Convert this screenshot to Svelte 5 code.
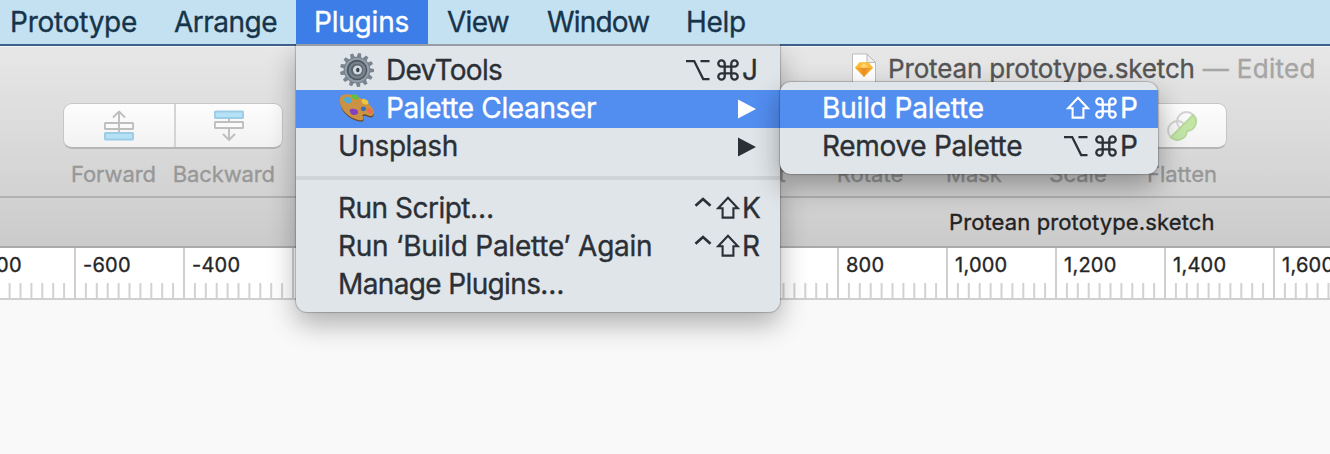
<script>
  const bar = [
    { label: 'Prototype', ls: -0.25 },
    { label: 'Arrange', ls: -0.5 },
    { label: 'Plugins', ls: -0.2, active: true },
    { label: 'View', ls: -0.7 },
    { label: 'Window', ls: -0.8 },
    { label: 'Help', ls: -0.3 }
  ];
  const menu = [
    { label: 'DevTools', ls: -0.72, icon: 'gear', keys: ['option', 'command'], key: 'J' },
    { label: 'Palette Cleanser', ls: -0.37, icon: 'palette', sub: true, active: true },
    { label: 'Unsplash', ls: -0.42, sub: true },
    { separator: true },
    { label: 'Run Script…', ls: -0.5, keys: ['control', 'shift'], key: 'K' },
    { label: 'Run ‘Build Palette’ Again', ls: -0.23, keys: ['control', 'shift'], key: 'R' },
    { label: 'Manage Plugins…', ls: -0.63 }
  ];
  const submenu = [
    { label: 'Build Palette', ls: -0.15, keys: ['shift', 'command'], key: 'P', active: true },
    { label: 'Remove Palette', ls: -0.31, keys: ['option', 'command'], key: 'P' }
  ];
  const tools = ['Edit', 'Rotate', 'Mask', 'Scale', 'Flatten'];
  const ruler = ['-800', '-600', '-400', '', '', '', '', '', '800', '1,000', '1,200', '1,400', '1,600'];
  const ticks = [1, 2, 3, 4, 5, 6, 7, 8, 9];
  const teeth = Array.from({ length: 13 }, (_, i) => (i * 360) / 13 + 8);
</script>

{#snippet symbol(name)}
  <svg class="symbol {name}" viewBox={name === 'control' ? '0 0 18 24' : '0 0 24 24'} fill="none" stroke="currentColor" stroke-width="2.3">
    {#if name === 'option'}
      <path d="M0 3.100h8.200l9 18h6.300M14.500 3.100h9" />
    {:else if name === 'command'}
      <path d="M8.700 8.700h6.600v6.600h-6.600zM8.700 8.700h-3.200a3.200 3.200 0 1 1 3.200-3.200zM15.300 8.700v-3.200a3.200 3.200 0 1 1 3.200 3.200zM15.300 15.300h3.200a3.200 3.200 0 1 1-3.200 3.200zM8.700 15.300v3.200a3.200 3.200 0 1 1-3.200-3.200z" />
    {:else if name === 'shift'}
      <path d="M12 1.800 2.200 12.200H6.600V21.600H17.400V12.200h4.400z" stroke-width="2.100" />
    {:else}
      <path d="M1.500 9.800 9 3l7.500 6.800" stroke-width="2.700" />
    {/if}
  </svg>
{/snippet}

{#snippet row(item)}
  <div class="row" class:active={item.active}>
    {#if item.icon === 'gear'}
      <svg class="emoji" viewBox="0 0 36 36">
        {#each teeth as a}
          <path d="M15.800 6 16.600 1h3.200l.8 5z" fill="#7b858f" transform={`rotate(${a} 18 18)`} />
        {/each}
        <circle cx="18" cy="18" r="13.300" fill="#74808a" />
        <circle cx="18" cy="18" r="12.300" fill="#929eaa" />
        <circle cx="18" cy="18" r="10.300" fill="#4d5760" />
        <circle cx="18.200" cy="18.200" r="8.600" fill="#76828c" />
        <circle cx="18" cy="18" r="6.200" fill="#5c6770" />
        <circle cx="18.500" cy="18" r="4.500" fill="#d2d9df" />
        <ellipse cx="18.800" cy="18" rx="1.700" ry="2.200" fill="#394149" />
      </svg>
    {:else if item.icon === 'palette'}
      <svg class="emoji" viewBox="0 0 36 36">
        <path d="M1.300 10C2 5 8 4.500 14 6c9 2.500 19.500 10 21 17.500 0 4-3 5-6.500 3-3.500-1.500-5.500-.5-4 1.500 1.500 3-1.500 4.500-5 3.300C10 29.500 0 20 1.300 10z" fill="#6d4a2a" />
        <path d="M.9 9C1.500 4 8 3.500 14 5c9 2.500 19.500 10 21 17 0 4-3 5-6.500 3-3.500-1.500-6-.5-4.500 2 1.500 2.500-1 4-4.500 3C10 28-.5 18.500.9 9z" fill="#cc9244" />
        <ellipse cx="24.500" cy="18.800" rx="2.600" ry="2.400" fill="#3f6dbb" />
        <path d="M5 9q1-3 4-2 3 0 3.500 3 1 3-2 3-2 1.500-4-1-2-1-1.500-3z" fill="#4fabd6" />
        <path d="M12.500 5.500q2-2.500 4-1 3 .5 3 3 .5 2.500-3 2-3 .5-4-4z" fill="#5fc043" />
        <path d="M22.500 10q2-2 4-.5 3 1 3 3.500-1 2-3.500 1.500-4-1-3.500-4.500z" fill="#ecc640" />
        <path d="M28 19q2-2 4 0 2.500 2 1.500 4-2 1.500-4-.5-2-1-1.500-3.500z" fill="#ee6a50" />
        <path d="M10.500 20.500q2-3 4.500-1.500 4 0 4 3 .5 3-4 3-3 .5-4.500-4.500z" fill="#8540bf" />
      </svg>
    {/if}
    <span class="label" style={`letter-spacing:${item.ls}px`}>{item.label}</span>
    {#if item.sub}
      <svg class="arrow" viewBox="0 0 18 20"><path d="M0 .5 18 10 0 19.500z" fill="currentColor" /></svg>
    {:else if item.keys}
      <span class="keys">
        {#each item.keys as k}{@render symbol(k)}{/each}
        <span class="key">{item.key}</span>
      </span>
    {/if}
  </div>
{/snippet}

<div class="screen">
  <nav class="menubar">
    {#each bar as b}
      <span class="bar-item {b.label.toLowerCase()}" class:active={b.active} style={`letter-spacing:${b.ls}px`}>{b.label}</span>
    {/each}
  </nav>

  <header class="chrome">
    <div class="title">
      <svg class="doc" viewBox="0 0 26 32">
        <path d="M1.500 1h14.500l8.500 8.500V31h-23z" fill="#fff" stroke="#bcbcbc" />
        <path d="M16 1v8.500h8.500z" fill="#ededed" stroke="#b9b9b9" />
        <path d="M8.500 9.500h9l4.500 5.200L13 24 4 14.700z" fill="#f6a623" />
        <path d="M8.500 9.500h9l4.500 5.200H4z" fill="#fdbe38" />
        <path d="m8.500 14.700 4.500-5.200 4.500 5.200L13 24z" fill="#f0922a" />
        <path d="m8.500 14.700 4.500-5.200 4.500 5.200z" fill="#ffd670" />
      </svg>
      <span class="name">Protean prototype.sketch</span>
      <span class="edited">— Edited</span>
    </div>
    <div class="toolbar">
      <div class="order">
        <div class="segmented">
          <div class="segment first">
            <svg viewBox="0 0 30 32" fill="none" stroke="#bebebe" stroke-width="1.900">
              <rect x=".9" y="13" width="28.200" height="6" rx=".8" fill="#fafafa" />
              <path d="M15 22V2M9 7.500l6-6 6 6" />
              <rect x=".9" y="23" width="28.200" height="6.500" rx=".8" fill="#b5e1f7" stroke="#9dcde6" />
            </svg>
          </div>
          <div class="segment">
            <svg viewBox="0 0 30 32" fill="none" stroke="#bebebe" stroke-width="1.900">
              <path d="M15 8v22M9 24l6 6 6-6" />
              <rect x=".9" y="1.500" width="28.200" height="6.500" rx=".8" fill="#b5e1f7" stroke="#9dcde6" />
              <rect x=".9" y="12" width="28.200" height="6" rx=".8" fill="#fafafa" />
            </svg>
          </div>
        </div>
        <div class="captions"><span>Forward</span><span>Backward</span></div>
      </div>
      <div class="tools">
        {#each tools as t}
          <div class="tool">
            <div class="button">
              {#if t === 'Flatten'}
                <svg viewBox="0 0 32 32" fill="none" stroke="#d2d2d2" stroke-width="1.800">
                  <circle cx="11.500" cy="20.500" r="9.500" /><circle cx="20.500" cy="11.500" r="9.500" />
                  <path d="M27.200 4.800A9.500 9.500 0 0 1 20.900 21 9.500 9.500 0 0 1 4.800 27.200z" fill="#c3e5a6" stroke="#b4d998" />
                </svg>
              {/if}
            </div>
            <span>{t}</span>
          </div>
        {/each}
      </div>
    </div>
  </header>

  <div class="tabbar"><span>Protean prototype.sketch</span></div>

  <div class="ruler">
    {#each ruler as r}
      <div class="mark">
        <span>{r}</span>
        <svg viewBox="0 0 109 15">
          {#each ticks as n}<rect x={n * 10.9} y="0" width="2" height="15" fill="#d2d2d2" />{/each}
        </svg>
      </div>
    {/each}
  </div>

  <div class="menu main">
    {#each menu as item}
      {#if item.separator}
        <div class="separator"></div>
      {:else}
        {@render row(item)}
      {/if}
    {/each}
  </div>
  <div class="menu sub">
    {#each submenu as item}{@render row(item)}{/each}
  </div>
</div>

<style>
  :global(body) { margin: 0; }
  .screen {
    position: relative;
    width: 1330px;
    height: 454px;
    overflow: hidden;
    background: #f9f9f9;
    font-family: Inter, 'Liberation Sans', sans-serif;
    font-weight: 400;
    -webkit-text-stroke: .35px currentColor;
    white-space: nowrap;
  }
  svg { display: block; flex: none; }
  .menubar {
    display: flex;
    height: 44px;
    background: #c4e1f2;
    border-bottom: 2px solid #3f618d;
    font-size: 28px;
    line-height: 45px;
    color: #16344a;
  }
  .bar-item { box-sizing: border-box; flex: none; height: 44px; }
  .prototype { width: 164px; padding-left: 10px; }
  .arrange { width: 132px; padding-left: 10px; }
  .plugins { width: 132px; padding-left: 18px; }
  .view { width: 118px; padding-left: 19px; }
  .window { width: 140px; padding-left: 1px; }
  .bar-item.active { background: #3d7de7; color: #fff; }
  .chrome {
    box-sizing: border-box;
    height: 152px;
    background: linear-gradient(#e7e7e7, #d2d2d2);
    border-bottom: 2px solid #b2b2b2;
    border-top: 1px solid #f3f3f3;
  }
  .title {
    display: flex;
    align-items: center;
    height: 46px;
    padding-left: 851px;
    font-size: 26px;
    line-height: 32px;
    color: #555;
  }
  .title span { margin-top: -2px; letter-spacing: -.15px; }
  .doc { width: 26px; height: 32px; margin: -2px 11px 0 0; }
  .title .edited { color: #a5a5a5; margin-left: 8px; letter-spacing: .3px; }
  .toolbar { display: flex; padding: 10px 0 0 63px; font-size: 22px; color: #989898; }
  .order { width: 220px; }
  .segmented, .button {
    display: flex;
    box-sizing: border-box;
    height: 46px;
    border: 1px solid #c6c6c6;
    border-bottom: 2px solid #b5b5b5;
    border-radius: 9px;
    background: linear-gradient(#fdfdfd, #f2f2f2);
  }
  .segment { display: flex; flex: 1; align-items: center; justify-content: center; }
  .segment.first { flex: 0 0 110px; }
  .segment + .segment { border-left: 2px solid #d4d4d4; }
  .segment svg { width: 30px; height: 32px; }
  .captions { display: flex; justify-content: space-between; padding: 0 8px; line-height: 28px; margin-top: 11px; letter-spacing: -.1px; }
  .tools { display: flex; margin-left: 431px; }
  .tool { display: flex; flex-direction: column; align-items: center; width: 104px; }
  .tool span { line-height: 28px; margin-top: 11px; }
  .button { width: 90px; align-items: center; justify-content: center; }
  .button svg { width: 32px; height: 32px; }
  .tabbar {
    display: flex;
    box-sizing: border-box;
    height: 50px;
    padding-left: 949px;
    background: linear-gradient(#d2d2d2, #cbcbcb);
    border-bottom: 2px solid #aaa;
    font-size: 22px;
    line-height: 49px;
    letter-spacing: .12px;
    color: #222;
  }
  .ruler {
    display: flex;
    box-sizing: border-box;
    height: 52px;
    margin-left: -35px;
    background: #fff;
    border-bottom: 2px solid #d0d0d0;
    font-size: 20px;
    letter-spacing: .25px;
    color: #262626;
  }
  .mark {
    display: flex;
    flex: none;
    flex-direction: column;
    justify-content: space-between;
    box-sizing: border-box;
    width: 109px;
    box-shadow: inset 2px 0 #cfcfcf;
  }
  .mark span { height: 34px; padding-left: 9px; line-height: 35px; }
  .mark svg { width: 109px; height: 15px; }
  .menu {
    position: absolute;
    box-sizing: border-box;
    background: #e0e5e9;
    color: #2b3036;
    font-size: 28px;
    line-height: 36px;
  }
  .main {
    left: 296px;
    top: 44px;
    width: 484px;
    height: 268px;
    padding-top: 6px;
    border-top: 2px solid #979da5;
    border-radius: 0 0 11px 11px;
    box-shadow: 0 0 1px 1px rgba(0, 0, 0, .2), 0 12px 28px rgba(0, 0, 0, .3);
    clip-path: inset(0 -60px -60px -60px);
  }
  .sub {
    left: 780px;
    top: 82px;
    width: 378px;
    height: 92px;
    padding: 8px 0;
    border-radius: 11px;
    box-shadow: 0 0 1px 1px rgba(0, 0, 0, .2), 0 12px 28px rgba(0, 0, 0, .33);
  }
  .row { display: flex; box-sizing: border-box; align-items: center; height: 38px; padding: 0 20px 0 42px; }
  .row.active { background: #528df0; color: #fff; }
  .emoji { width: 36px; height: 36px; margin: -3px 11px 0 1px; }
  .label { flex: 1; margin-top: -2px; }
  .arrow { width: 18px; height: 20px; margin-right: 4px; }
  .keys { display: flex; align-items: center; }
  .symbol { width: 24px; height: 24px; margin: -2px 4px 0 0; }
  .symbol.control { width: 18px; }
  .symbol.option { margin-right: 6px; }
  .symbol:nth-last-child(2) { margin-right: 2px; }
  .key { width: 18px; margin-top: -2px; }
  .separator { height: 4px; margin: 10px 0; background: #cfd4d8; }
</style>
